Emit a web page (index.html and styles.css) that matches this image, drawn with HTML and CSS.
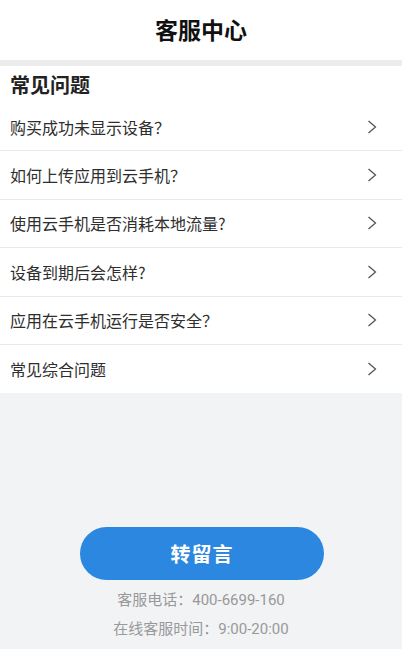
FILE: index.html
```html
<!DOCTYPE html>
<html lang="zh-CN">
<head>
<meta charset="utf-8">
<title>客服中心</title>
<link rel="stylesheet" href="styles.css">
</head>
<body>
<div class="page">
  <header class="topbar"><h1 class="title">客服中心</h1></header>
  <div class="band"></div>
  <section class="faq">
    <h2 class="faq-head">常见问题</h2>
    <ul class="faq-list">
      <li class="faq-row"><span class="faq-text">购买成功未显示设备？</span><svg class="chev" viewBox="0 0 10 14" width="10" height="14"><path d="M1.5 1 L8.5 7 L1.5 13" fill="none" stroke="#555" stroke-width="1.3"/></svg></li>
      <li class="faq-row"><span class="faq-text">如何上传应用到云手机？</span><svg class="chev" viewBox="0 0 10 14" width="10" height="14"><path d="M1.5 1 L8.5 7 L1.5 13" fill="none" stroke="#555" stroke-width="1.3"/></svg></li>
      <li class="faq-row"><span class="faq-text">使用云手机是否消耗本地流量?</span><svg class="chev" viewBox="0 0 10 14" width="10" height="14"><path d="M1.5 1 L8.5 7 L1.5 13" fill="none" stroke="#555" stroke-width="1.3"/></svg></li>
      <li class="faq-row"><span class="faq-text">设备到期后会怎样?</span><svg class="chev" viewBox="0 0 10 14" width="10" height="14"><path d="M1.5 1 L8.5 7 L1.5 13" fill="none" stroke="#555" stroke-width="1.3"/></svg></li>
      <li class="faq-row"><span class="faq-text">应用在云手机运行是否安全？</span><svg class="chev" viewBox="0 0 10 14" width="10" height="14"><path d="M1.5 1 L8.5 7 L1.5 13" fill="none" stroke="#555" stroke-width="1.3"/></svg></li>
      <li class="faq-row"><span class="faq-text">常见综合问题</span><svg class="chev" viewBox="0 0 10 14" width="10" height="14"><path d="M1.5 1 L8.5 7 L1.5 13" fill="none" stroke="#555" stroke-width="1.3"/></svg></li>
    </ul>
  </section>
  <footer class="foot">
    <button class="msg-btn" type="button">转留言</button>
    <p class="info">客服电话：400-6699-160</p>
    <p class="info">在线客服时间：9:00-20:00</p>
  </footer>
</div>
</body>
</html>
```

FILE: styles.css
```css
* { box-sizing: border-box; }
html, body {
  margin: 0;
  padding: 0;
  background: #f2f3f5;
  font-family: "Noto Sans CJK SC", "Noto Sans", sans-serif;
}
.page {
  width: 402px;
  min-height: 649px;
  display: flex;
  flex-direction: column;
  background: #f2f3f5;
}
.topbar {
  height: 60px;
  padding-bottom: 2px;
  background: #fff;
  display: flex;
  align-items: center;
  justify-content: center;
}
.title {
  margin: 0;
  font-size: 23px;
  font-weight: 700;
  color: #111;
  line-height: 1;
}
.band {
  height: 6px;
  background: #ececec;
}
.faq {
  background: #fff;
}
.faq-head {
  margin: 0;
  height: 37px;
  padding: 0 10px;
  display: flex;
  align-items: center;
  font-size: 20px;
  font-weight: 700;
  color: #222;
  line-height: 1;
}
.faq-list {
  list-style: none;
  margin: 0;
  padding: 0;
}
.faq-row {
  height: 48.4px;
  display: flex;
  align-items: center;
  justify-content: space-between;
  padding: 0 25px 0 10px;
  border-bottom: 1px solid #e9e9e9;
}
.faq-row:last-child {
  border-bottom: none;
}
.faq-text {
  font-size: 16px;
  color: #2e2e2e;
  line-height: 1;
}
.chev {
  display: block;
}
.foot {
  display: flex;
  flex-direction: column;
  align-items: center;
  padding-top: 134px;
}
.msg-btn {
  width: 244px;
  height: 53px;
  border: none;
  border-radius: 27px;
  background: #2b87df;
  color: #fff;
  font-family: inherit;
  font-size: 20px;
  font-weight: 700;
  letter-spacing: 1px;
  margin-left: 2px;
}
.info {
  margin: 0;
  font-family: "Roboto", "Noto Sans CJK SC", sans-serif;
  font-size: 15px;
  color: #999;
  line-height: 29px;
}
.info:first-of-type {
  margin-top: 6px;
}
```
